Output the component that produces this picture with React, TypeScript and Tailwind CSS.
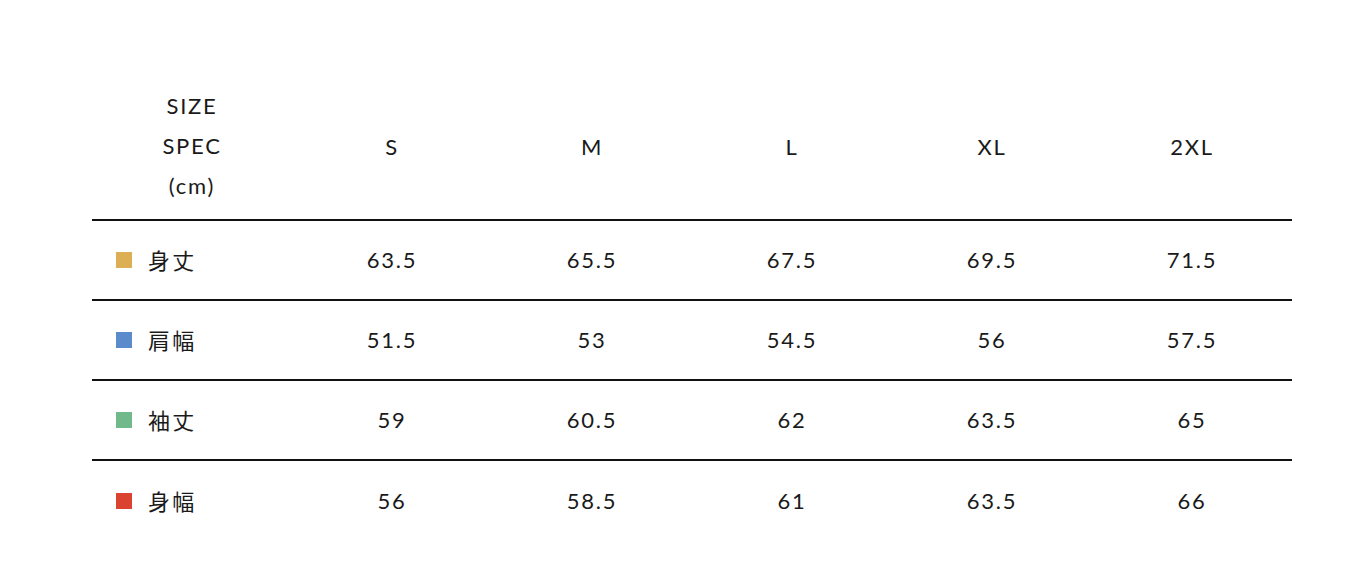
const sizes = ["S", "M", "L", "XL", "2XL"];

const rows = [
  { label: "身丈", color: "bg-[#dcaf55]", values: ["63.5", "65.5", "67.5", "69.5", "71.5"] },
  { label: "肩幅", color: "bg-[#5b8bca]", values: ["51.5", "53", "54.5", "56", "57.5"] },
  { label: "袖丈", color: "bg-[#71b98a]", values: ["59", "60.5", "62", "63.5", "65"] },
  { label: "身幅", color: "bg-[#d9432f]", values: ["56", "58.5", "61", "63.5", "66"] },
];

export default function App() {
  return (
    <div className="min-h-screen bg-white pt-[72px] text-[#1a1a1a] font-['Lato','Noto_Sans_CJK_JP',sans-serif]">
      <div className="ml-[92px] w-[1200px]">
        {/* header */}
        <div className="grid grid-cols-6 border-b-2 border-[#111] pt-[14px] pb-[13px]">
          <div className="flex flex-col items-center text-[22px] leading-[40px] tracking-[0.08em]">
            <span>SIZE</span>
            <span>SPEC</span>
            <span>(cm)</span>
          </div>
          {sizes.map((s) => (
            <div key={s} className="flex items-center justify-center text-[22px] tracking-[0.08em]">
              {s}
            </div>
          ))}
        </div>

        {rows.map((row, i) => (
          <div
            key={row.label}
            className={`grid grid-cols-6 h-[80px] pb-[2px] ${i < rows.length - 1 ? "border-b-2 border-[#111]" : ""}`}
          >
            <div className="flex items-center pl-[24px] gap-[16px]">
              <span className={`w-[16px] h-[16px] mt-[2px] ${row.color}`} />
              <span className="text-[22px] leading-[30px] tracking-[0.1em] font-['Noto_Sans_CJK_JP',sans-serif]">
                {row.label}
              </span>
            </div>
            {row.values.map((v, j) => (
              <div key={j} className="flex items-center justify-center text-[22px] tracking-[0.08em]">
                {v}
              </div>
            ))}
          </div>
        ))}
      </div>
    </div>
  );
}
